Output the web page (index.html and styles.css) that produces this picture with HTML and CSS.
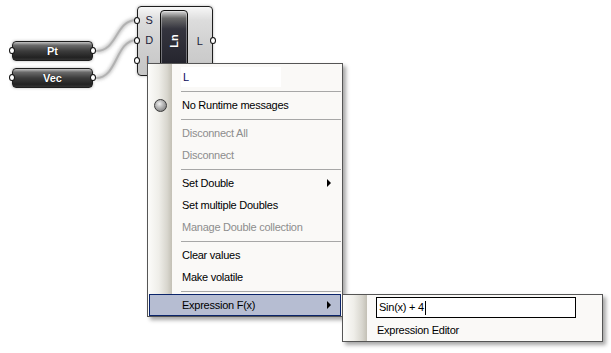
FILE: index.html
```html
<!DOCTYPE html>
<html>
<head>
<meta charset="utf-8">
<link rel="stylesheet" href="styles.css">
</head>
<body>
<div class="canvas">
  <svg class="wires" width="611" height="353" viewBox="0 0 611 353">
    <defs>
      <filter id="blur" x="-20%" y="-20%" width="140%" height="140%">
        <feGaussianBlur stdDeviation="1.8"/>
      </filter>
    </defs>
    <g class="wire-shadow" filter="url(#blur)">
      <path d="M96,51 C118,51 115,20 137,20"/>
      <path d="M96,78 C118,78 115,40 137,40"/>
    </g>
    <g class="wire-core">
      <path d="M96,51 C118,51 115,20 137,20"/>
      <path d="M96,78 C118,78 115,40 137,40"/>
    </g>
  </svg>

  <div class="param param-pt">
    <span class="param-label">Pt</span>
    <i class="nub nub-left"></i><i class="nub nub-right"></i>
  </div>
  <div class="param param-vec">
    <span class="param-label">Vec</span>
    <i class="nub nub-left"></i><i class="nub nub-right"></i>
  </div>

  <div class="comp">
    <div class="comp-inputs">
      <span class="port">S</span>
      <span class="port">D</span>
      <span class="port">L</span>
    </div>
    <div class="comp-name"><span class="comp-name-text">Ln</span></div>
    <div class="comp-outputs">
      <span class="port">L</span>
    </div>
    <i class="nub cnub cnub-s"></i>
    <i class="nub cnub cnub-d"></i>
    <i class="nub cnub cnub-l"></i>
    <i class="nub cnub cnub-out"></i>
  </div>

  <div class="menu">
    <div class="menu-input-row"><div class="menu-input">L</div></div>
    <div class="sep"></div>
    <div class="item"><span class="gut"><span class="radio"></span></span><span class="label">No Runtime messages</span></div>
    <div class="sep"></div>
    <div class="item disabled"><span class="gut"></span><span class="label">Disconnect All</span></div>
    <div class="item disabled"><span class="gut"></span><span class="label">Disconnect</span></div>
    <div class="sep"></div>
    <div class="item"><span class="gut"></span><span class="label">Set Double</span><span class="arrow"></span></div>
    <div class="item"><span class="gut"></span><span class="label">Set multiple Doubles</span></div>
    <div class="item disabled"><span class="gut"></span><span class="label">Manage Double collection</span></div>
    <div class="sep"></div>
    <div class="item"><span class="gut"></span><span class="label">Clear values</span></div>
    <div class="item"><span class="gut"></span><span class="label">Make volatile</span></div>
    <div class="sep"></div>
    <div class="item selected"><span class="gut"></span><span class="label">Expression F(x)</span><span class="arrow"></span></div>
  </div>

  <div class="submenu">
    <div class="sub-input-row"><div class="sub-input">Sin(x) + 4<span class="caret"></span></div></div>
    <div class="item sub-item"><span class="gut"></span><span class="label">Expression Editor</span></div>
  </div>
</div>
</body>
</html>
```

FILE: styles.css
```css
html, body {
  margin: 0;
  padding: 0;
  background: #ffffff;
}

.canvas {
  position: relative;
  width: 611px;
  height: 353px;
  overflow: hidden;
  background: #ffffff;
  font-family: "Liberation Sans", Arial, sans-serif;
  font-size: 11px;
}

.wires {
  position: absolute;
  left: 0;
  top: 0;
}

.wire-shadow path {
  fill: none;
  stroke: rgba(110, 110, 110, 0.35);
  stroke-width: 5;
}

.wire-core path {
  fill: none;
  stroke: rgba(165, 165, 165, 0.7);
  stroke-width: 2;
}

/* parameter nodes */
.param {
  position: absolute;
  left: 12px;
  width: 79px;
  height: 18px;
  border: 1px solid #1e1e1e;
  border-radius: 4px;
  background: linear-gradient(#c4c4c4 0%, #6a6a6a 18%, #3c3c3c 50%, #222222 85%, #333333 100%);
  box-shadow: 0 0 3px rgba(0, 0, 0, 0.3);
  display: flex;
  align-items: center;
  justify-content: center;
}

.param-pt { top: 41px; }
.param-vec { top: 68px; }

.param-label {
  color: #ffffff;
  font-size: 11px;
  font-weight: bold;
  text-shadow: 0 0 1px #000;
}

.nub {
  position: absolute;
  width: 6px;
  height: 7px;
  border: 1px solid #111;
  border-radius: 50%;
  background: #ffffff;
  box-sizing: border-box;
}

.nub-left { left: -4px; top: 5px; }
.nub-right { right: -4px; top: 5px; }

/* component */
.comp {
  position: absolute;
  left: 137px;
  top: 6px;
  width: 74px;
  height: 68px;
  border: 1px solid #1e1e1e;
  border-radius: 4px;
  background: linear-gradient(#f7f7f7 0%, #dcdcdc 20%, #cfcfcf 60%, #c6c6c6 100%);
  box-shadow: 0 0 3px rgba(0, 0, 0, 0.3);
  display: flex;
}

.comp-inputs {
  width: 23px;
  padding-top: 3px;
  display: flex;
  flex-direction: column;
}

.port {
  height: 20px;
  line-height: 20px;
  text-align: center;
  color: #1c1c3a;
  font-size: 11px;
}

.comp-name {
  width: 26px;
  margin: 3px 0 3px 0;
  border: 1px solid #0d0d0d;
  border-radius: 4px;
  box-shadow: inset 0 0 0 1px rgba(255, 255, 255, 0.35);
  background: linear-gradient(#d8d8d8 0%, #6a6a6a 12%, #34343e 30%, #2a2a33 70%, #22222a 100%);
  display: flex;
  align-items: center;
  justify-content: center;
}

.comp-name-text {
  display: block;
  transform: rotate(-90deg);
  color: #ffffff;
  font-size: 11px;
  font-weight: bold;
}

.comp-outputs {
  width: 25px;
  display: flex;
  flex-direction: column;
  justify-content: center;
}

.cnub { left: -4px; }
.cnub-s { top: 10px; }
.cnub-d { top: 30px; }
.cnub-l { top: 50px; }
.cnub-out { left: auto; right: -4px; top: 30px; }

/* context menu */
.menu {
  position: absolute;
  left: 147px;
  top: 63px;
  width: 194px;
  border: 1px solid #555555;
  background: linear-gradient(to right, #fcfcfa 0%, #efeee9 45%, #d8d6ce 80%, #c3c0b5 100%) no-repeat 0 0 / 24px 100%, #faf9f7;
  box-shadow: 3px 3px 4px rgba(0, 0, 0, 0.35);
  color: #000000;
  letter-spacing: -0.25px;
}

.menu-input-row {
  padding: 3px 0 1px 33px;
}

.menu-input {
  width: 98px;
  height: 20px;
  line-height: 20px;
  padding-left: 2px;
  background: #ffffff;
  color: #0a0a5a;
}

.sep {
  height: 1px;
  margin: 3px 1px 2px 33px;
  background: #a7a7a7;
}

.item {
  height: 22px;
  display: flex;
  align-items: center;
}

.gut {
  width: 24px;
  height: 22px;
  flex: none;
  display: flex;
  align-items: center;
  justify-content: center;
  margin-right: 10px;
}

.label {
  white-space: nowrap;
}

.item.disabled {
  color: #8d8d8d;
}

.radio {
  width: 11px;
  height: 11px;
  margin-left: 1px;
  border: 1px solid #3a3a3a;
  border-radius: 50%;
  background: radial-gradient(circle at 40% 35%, #f2f2f2 0%, #bdbdbd 35%, #8a8a8a 75%, #6a6a6a 100%);
}

.arrow {
  margin-left: auto;
  margin-right: 11px;
  width: 0;
  height: 0;
  border-left: 4px solid #000000;
  border-top: 4px solid transparent;
  border-bottom: 4px solid transparent;
}

.item.selected {
  height: 20px;
  margin: 0 1px;
  border: 1px solid #0a246a;
  background: #b6bdd2;
}

.item.selected .gut {
  width: 22px;
  height: 20px;
}

.item.selected .arrow {
  margin-right: 9px;
}

/* submenu */
.submenu {
  position: absolute;
  left: 342px;
  top: 294px;
  width: 259px;
  border: 1px solid #555555;
  background: linear-gradient(to right, #fcfcfa 0%, #efeee9 45%, #d8d6ce 80%, #c3c0b5 100%) no-repeat 0 0 / 24px 100%, #faf9f7;
  box-shadow: 3px 3px 4px rgba(0, 0, 0, 0.35);
  letter-spacing: -0.25px;
}

.sub-input-row {
  padding: 2px 0 1px 33px;
}

.sub-input {
  width: 196px;
  height: 19px;
  line-height: 19px;
  padding-left: 2px;
  border: 1px solid #000000;
  background: #ffffff;
  display: flex;
  align-items: center;
}

.caret {
  display: inline-block;
  width: 1px;
  height: 14px;
  background: #000000;
  margin-left: 1px;
}

.sub-item .gut {
  margin-right: 10px;
}
```
